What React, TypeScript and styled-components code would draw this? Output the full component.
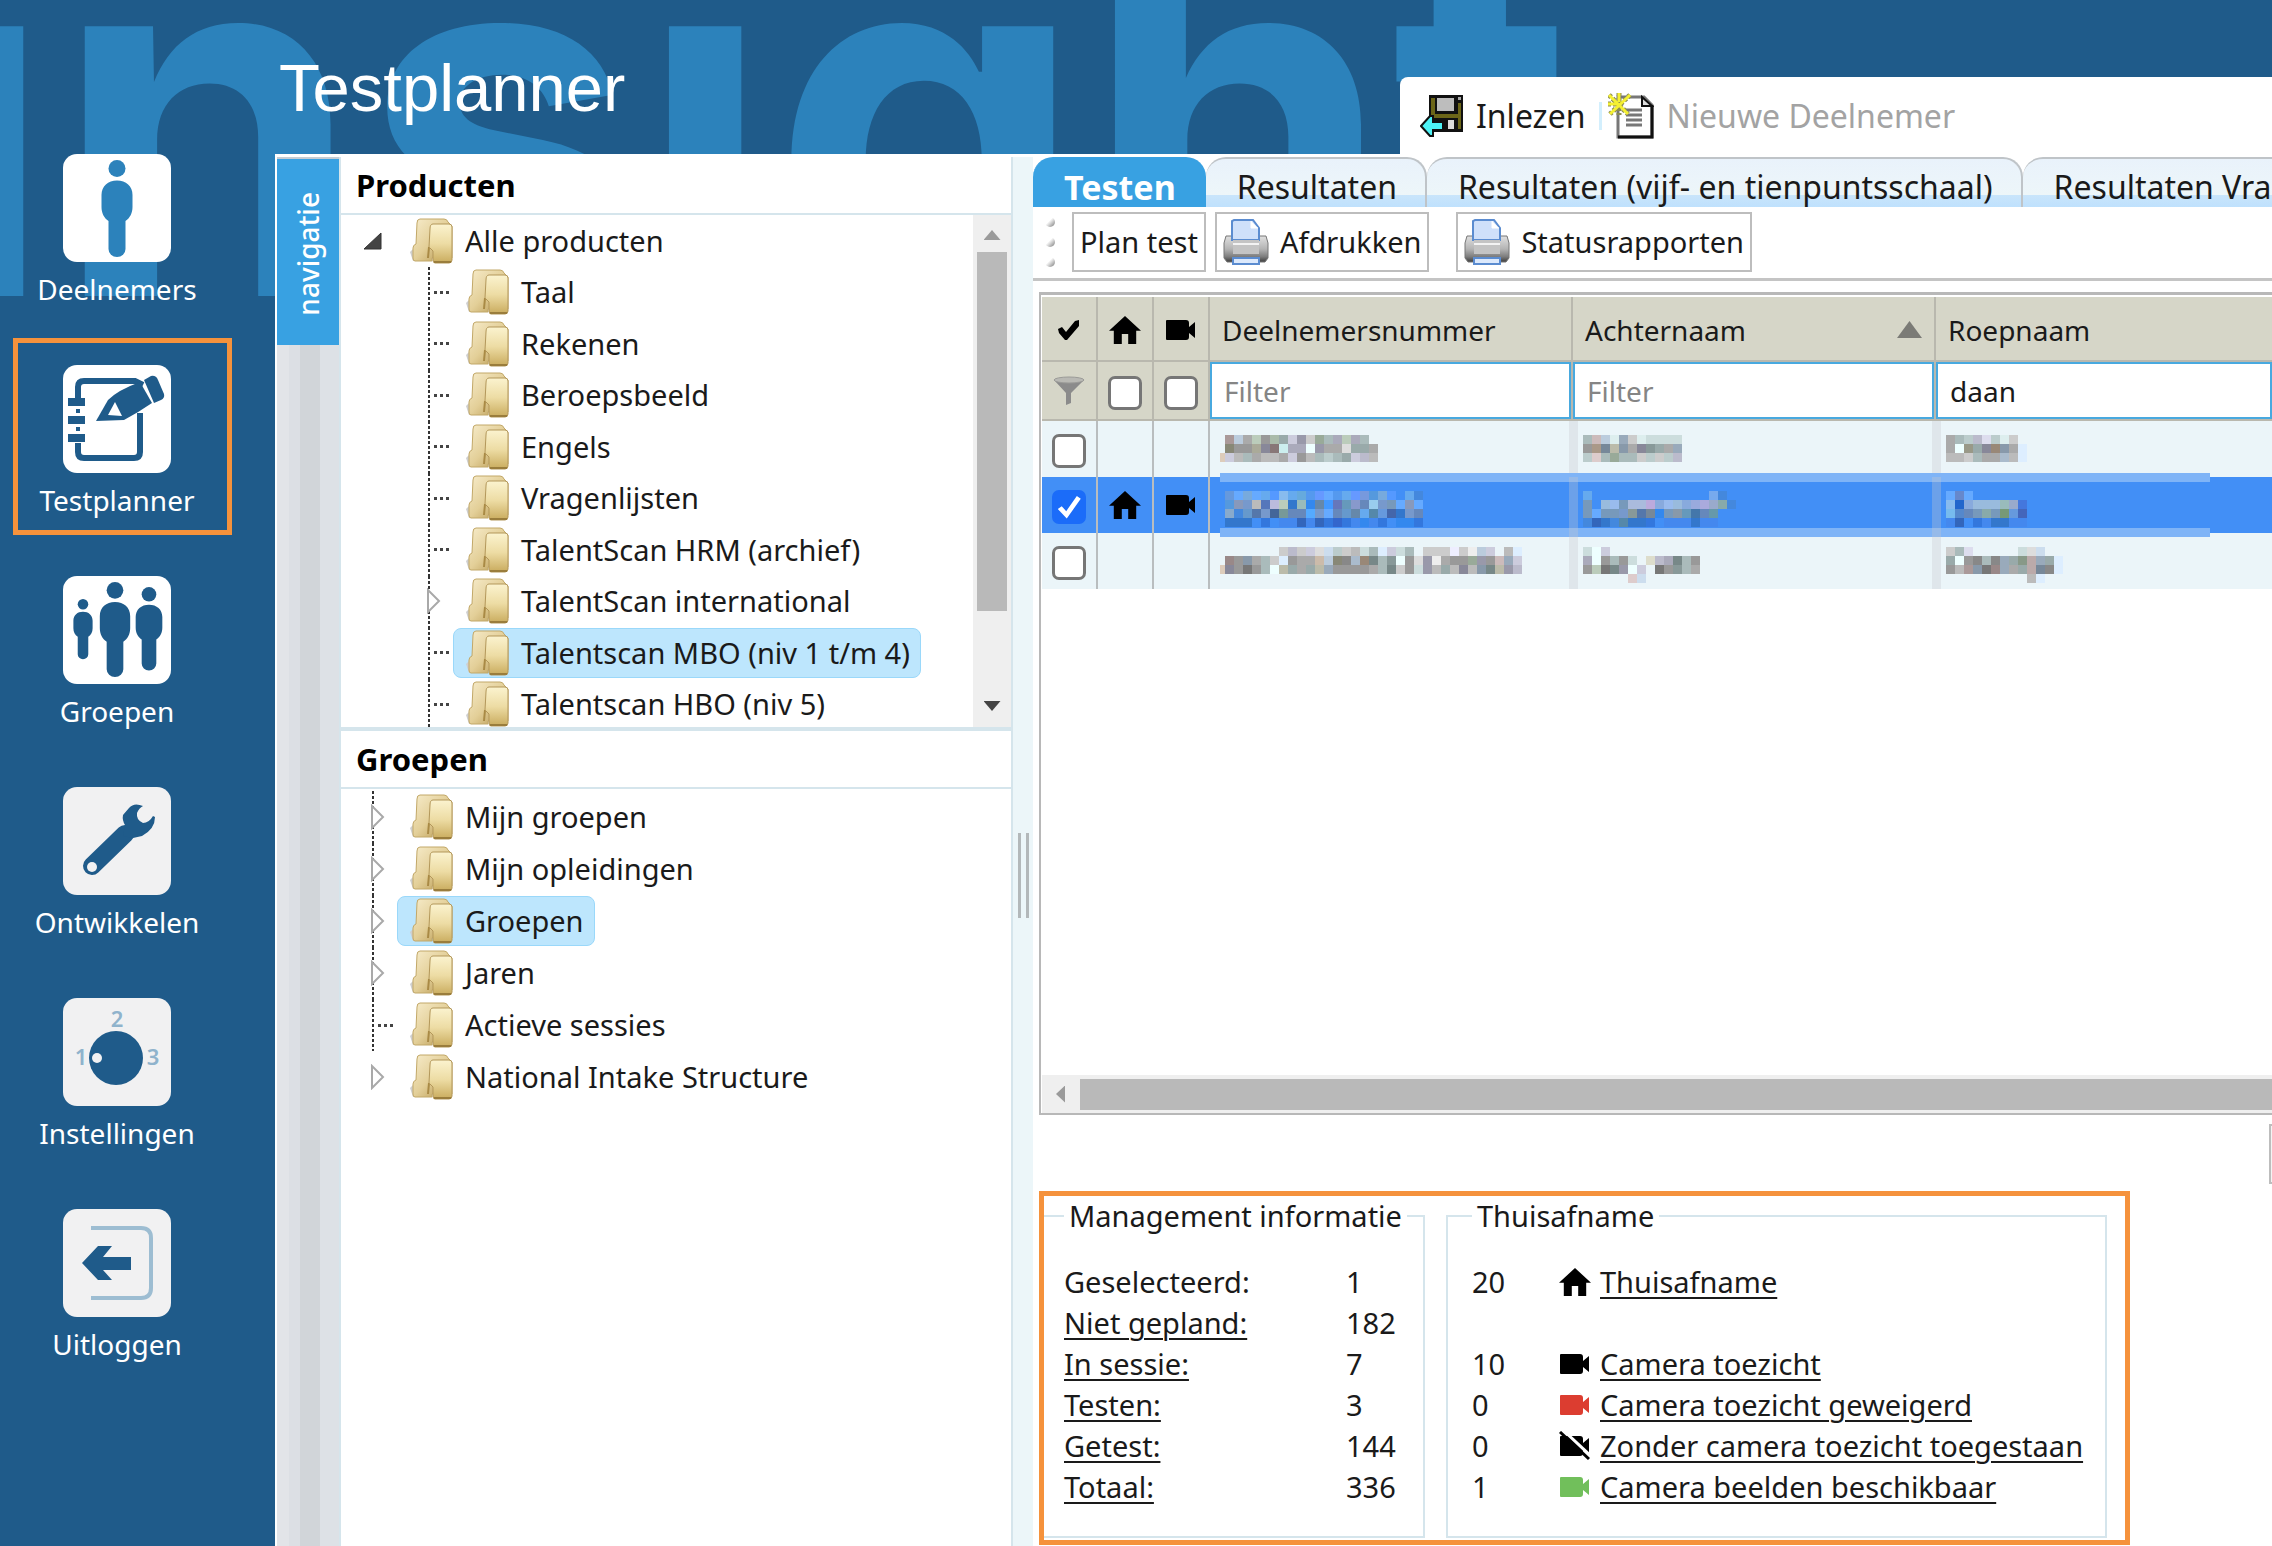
import React from 'react';
import styled, { createGlobalStyle, css } from 'styled-components';

const color = {
  navy: '#1f5b8a',
  water: '#2c82bb',
  accent: '#38a1e2',
  orange: '#f5923c',
  line: '#d5e5ec',
  pale: '#ecf6f9',
  head: '#d6d6c8',
  headLine: '#b9b8ae',
  grey: '#b9b9b9',
  track: '#efefef',
  row: '#ebf5f9',
  selected: '#428ff6',
  text: '#1a1a1a',
};

const GlobalStyle = createGlobalStyle`
  * { box-sizing: border-box; }
  body {
    margin: 0;
    font: 29px/36px "Noto Sans", "Open Sans", sans-serif;
    color: ${color.text};
  }
  button, input { font: inherit; color: inherit; }
  button { cursor: pointer; }
  svg { display: block; flex: none; }
`;

/* ---------- shell ---------- */

const Page = styled.div`
  position: relative;
  display: grid;
  grid-template: 154px 1fr / 275px minmax(0, 1fr);
  min-height: 100vh;
  overflow: hidden;
  background: ${color.navy};
`;

const Watermark = styled.div`
  position: absolute;
  left: -80px;
  top: -131px;
  height: 429px;
  overflow: hidden;
  font: bold 494px/494px Inter, Roboto, sans-serif;
  color: ${color.water};
  white-space: nowrap;
  user-select: none;
`;

const Header = styled.header`
  position: relative;
  grid-column: 2;
  display: grid;
  grid-template-columns: minmax(0, 1125px) minmax(0, 1fr);
`;

const Title = styled.h1`
  margin: 0;
  padding: 48px 0 0 4px;
  font: 67px/80px "Liberation Sans", Arial, sans-serif;
  color: #fff;
`;

const TopBar = styled.div`
  display: flex;
  align-items: center;
  align-self: end;
  height: 77px;
  padding-left: 20px;
  border-radius: 8px 0 0 0;
  background: #fff;
`;

const TopAction = styled.button`
  display: flex;
  align-items: center;
  gap: 12px;
  padding: 0;
  border: 0;
  background: none;
  font-size: 32px;
  white-space: nowrap;
  &:disabled { color: #a3a3a3; }
`;

const TopDivider = styled.span`
  width: 3px;
  height: 28px;
  margin: 0 6px 0 14px;
  background: #d3effd;
`;

/* ---------- sidebar ---------- */

const Sidebar = styled.nav`
  position: relative;
  grid-row: 2;
  grid-column: 1;
  display: flex;
  flex-direction: column;
  padding-left: 13px;
`;

const SideItem = styled.a<{ $active?: boolean }>`
  position: relative;
  display: flex;
  flex-direction: column;
  align-items: center;
  gap: 9px;
  width: 208px;
  height: 211px;
  font-size: 28px;
  color: #fff;
  text-decoration: none;
  ${p => p.$active && css`
    &::after {
      content: '';
      position: absolute;
      inset: -27px -11px 41px 0;
      border: 5px solid ${color.orange};
    }
  `}
`;

/* ---------- workspace ---------- */

const Workspace = styled.div`
  position: relative;
  grid-row: 2;
  grid-column: 2;
  display: flex;
  padding: 3px 0 0 2px;
  background: #fff;
`;

const NavStrip = styled.div`
  flex: 0 0 62px;
  background: linear-gradient(to right, #e2e4e8 12px, #dcdfe4 12px 23px, #d1d5d9 23px 43px, #dde1e6 43px);
`;

const NavTab = styled.button`
  width: 62px;
  height: 188px;
  padding: 4px 0 0;
  border: 0;
  border-top: 2px solid #c5cdd4;
  background: ${color.accent};
  color: #fff;
  font-size: 28px;
  font-weight: 500;
  writing-mode: vertical-rl;
  span { display: inline-block; transform: rotate(180deg); }
`;

const Explorer = styled.div`
  flex: 0 0 674px;
  display: flex;
  flex-direction: column;
  border: solid ${color.line};
  border-width: 0 2px;
`;

const PanelTitle = styled.h2`
  margin: 0;
  height: 58px;
  padding-left: 15px;
  border-bottom: 2px solid ${color.line};
  font-size: 31px;
  line-height: 56px;
  color: #000;
`;

const ProductArea = styled.div`
  display: flex;
  justify-content: space-between;
  height: 516px;
  border-bottom: 4px solid ${color.line};
  overflow: hidden;
`;

const GroupArea = styled.div`
  padding-top: 2px;
`;

const Tree = styled.ul<{ $rows: number; $rowHeight: string }>`
  display: grid;
  grid-template-rows: repeat(${p => p.$rows}, ${p => p.$rowHeight});
  height: ${p => (p.$rowHeight === '1fr' ? '515px' : 'auto')};
  margin: 0;
  padding: 0;
  list-style: none;
`;

const TreeRow = styled.li<{ $depth: number }>`
  display: flex;
  align-items: center;
  padding-left: ${p => 22 + 56 * p.$depth}px;
`;

const Connector = styled.span<{ $line: boolean; $branch: boolean }>`
  display: flex;
  align-items: center;
  align-self: stretch;
  width: 34px;
  background-image:
    repeating-linear-gradient(#333 0 3px, transparent 3px 5px),
    repeating-linear-gradient(to right, #444 0 3px, transparent 3px 6px);
  background-repeat: no-repeat;
  background-position: 9px 0, 15px 50%;
  background-size: ${p => (p.$line ? '2px 100%' : '0 0')}, ${p => (p.$branch ? '15px 3px' : '0 0')};
`;

const Node = styled.button<{ $selected?: boolean }>`
  display: flex;
  align-items: center;
  gap: 12px;
  height: 50px;
  padding: 0 10px 0 12px;
  border: 1px solid ${p => (p.$selected ? '#9ad8fa' : 'transparent')};
  border-radius: 8px;
  background: ${p => (p.$selected ? '#bde6fd' : 'none')};
  white-space: nowrap;
`;

const VScroll = styled.div`
  display: flex;
  flex-direction: column;
  align-items: center;
  justify-content: space-between;
  width: 38px;
  padding: 15px 0 16px;
  background: ${color.track};
`;

const VThumb = styled.div`
  width: 30px;
  height: 359px;
  margin: 12px 0 auto;
  background: ${color.grey};
`;

const Arrow = styled.span<{ $dir: 'up' | 'down' | 'left'; $tone?: string }>`
  width: ${p => (p.$dir === 'left' ? 9 : 17)}px;
  height: ${p => (p.$dir === 'left' ? 17 : 10)}px;
  background: ${p => p.$tone ?? '#9a9a9a'};
  clip-path: ${p => ({
    up: 'polygon(50% 0, 100% 100%, 0 100%)',
    down: 'polygon(0 0, 100% 0, 50% 100%)',
    left: 'polygon(0 50%, 100% 0, 100% 100%)',
  })[p.$dir]};
`;

const Splitter = styled.div`
  flex: 0 0 20px;
  padding: 676px 4px 0 5px;
  background: ${color.pale};
  &::before {
    content: '';
    display: block;
    height: 85px;
    border: solid #b3b8ba;
    border-width: 0 3px;
  }
`;

/* ---------- main ---------- */

const Main = styled.main`
  flex: 1;
  min-width: 0;
  display: flex;
  flex-direction: column;
`;

const Tabs = styled.div`
  display: flex;
  flex: 0 0 50px;
  overflow: hidden;
`;

const Tab = styled.button<{ $active?: boolean }>`
  flex: none;
  padding: 8px 28px 0 31px;
  border: 2px solid ${p => (p.$active ? color.accent : '#bfc4c8')};
  border-width: 2px 2px 0 0;
  border-radius: 20px 20px 0 0;
  background: ${p => (p.$active ? color.accent : 'linear-gradient(#e9f2fb, #edf6f9 36px, #c9e5fb 36px, #bfe1fd)')};
  color: ${p => (p.$active ? '#fff' : color.text)};
  font-size: ${p => (p.$active ? 34 : 32)}px;
  font-weight: ${p => (p.$active ? 700 : 400)};
  white-space: nowrap;
`;

const ToolRow = styled.div`
  display: flex;
  align-items: center;
  flex: 0 0 74px;
  padding: 0 0 2px 12px;
  border-bottom: 3px solid #c4c4c4;
`;

const Grip = styled.span`
  display: grid;
  gap: 10px;
  margin-right: 17px;
  i {
    width: 10px;
    height: 10px;
    border-radius: 50%;
    background: linear-gradient(135deg, #fff 40%, #777);
  }
`;

const ToolButton = styled.button<{ $wide?: boolean }>`
  display: flex;
  align-items: center;
  gap: 11px;
  height: 60px;
  margin-right: ${p => (p.$wide ? 27 : 9)}px;
  padding: 0 6px;
  border: 2px solid #bdbdbd;
  background: #fff;
  white-space: nowrap;
`;

const GridBox = styled.section`
  flex: 1;
  display: flex;
  flex-direction: column;
  margin: 11px 0 0 6px;
  border: solid #b8b8b8;
  border-width: 3px 0 2px 2px;
  padding: 2px 0 0 1px;
`;

const Table = styled.table`
  width: 100%;
  table-layout: fixed;
  border-collapse: separate;
  border-spacing: 0;
  font-size: 28px;
`;

const Th = styled.th`
  height: 65px;
  padding: 2px 12px 0;
  border: solid ${color.headLine};
  border-width: 0 2px 2px 0;
  background: ${color.head};
  font-weight: 400;
  text-align: left;
  &:last-child { border-right: 0; }
`;

const HeadLabel = styled.div`
  display: flex;
  align-items: center;
  justify-content: space-between;
`;

const SortMark = styled.span`
  width: 25px;
  height: 17px;
  background: #7b7b76;
  clip-path: polygon(50% 0, 100% 100%, 0 100%);
`;

const IconTh = styled(Th)`
  padding: 2px 0 0;
  svg { margin: 0 auto; }
`;

const FilterTh = styled(Th)`
  height: 59px;
  padding: 0;
  text-align: center;
  svg { margin: 0 auto; }
`;

const FilterInput = styled.input`
  display: block;
  width: 100%;
  height: 57px;
  padding: 0 12px;
  border: 2px solid #48a9df;
  border-radius: 0;
  outline: 0;
  &::placeholder { color: #858585; opacity: 1; }
`;

const Check = styled.input`
  appearance: none;
  display: inline-block;
  width: 34px;
  height: 34px;
  margin: 0;
  border: 3px solid #767676;
  border-radius: 7px;
  background: #fff;
  vertical-align: middle;
  &:checked { border-color: #1b6cf9; background: #1b6cf9; }
  &:checked::before {
    content: '';
    display: block;
    height: 28px;
    background: #fff;
    clip-path: polygon(10% 56%, 24% 46%, 40% 64%, 78% 10%, 92% 20%, 42% 90%);
  }
`;

const Tr = styled.tr<{ $selected?: boolean }>`
  background: ${p => (p.$selected ? color.selected : color.row)};
`;

const IconTd = styled.td`
  height: 56px;
  padding: 0;
  border-right: 2px solid #b9bdbf;
  text-align: center;
  svg { margin: 0 auto; }
`;

const DataTd = styled.td<{ $selected?: boolean; $edge: 'first' | 'middle' | 'last' }>`
  position: relative;
  padding: 14px 0 0 10px;
  vertical-align: top;
  ${p => p.$selected && css`
    &::before {
      content: '';
      position: absolute;
      top: -4px;
      bottom: -4px;
      left: ${p.$edge === 'first' ? 10 : 0}px;
      right: ${p.$edge === 'last' ? 62 : 0}px;
      border: solid #7fb4f7;
      border-width: 9px 0;
    }
  `}
  ${p => p.$edge !== 'first' && css`
    &::after {
      content: '';
      position: absolute;
      top: 0;
      bottom: 0;
      left: -4px;
      width: 9px;
      background: rgba(200, 200, 205, 0.32);
    }
  `}
`;

const HScroll = styled.div`
  display: flex;
  align-items: center;
  height: 38px;
  margin-top: auto;
  padding-left: 14px;
  background: ${color.track};
`;

const HThumb = styled.div`
  flex: 1;
  height: 31px;
  margin-left: 15px;
  background: ${color.grey};
`;

const PagerRow = styled.div`
  display: flex;
  justify-content: flex-end;
  flex: 0 0 76px;
  padding-top: 9px;
`;

const PagerButton = styled.button`
  width: 60px;
  height: 60px;
  margin-right: -57px;
  border: 2px solid #bdbdbd;
  background: #f4f4f4;
`;

const Summary = styled.section`
  display: flex;
  align-self: flex-start;
  gap: 21px;
  margin: 0 0 1px 6px;
  padding: 2px 18px 2px 0;
  border: 5px solid ${color.orange};
`;

const Box = styled.fieldset<{ $open?: boolean }>`
  margin: 0;
  padding: 27px ${p => (p.$open ? 14 : 22)}px 29px ${p => (p.$open ? 20 : 24)}px;
  border: 2px solid ${color.line};
  border-left-width: ${p => (p.$open ? 0 : 2)}px;
`;

const Legend = styled.legend`
  padding: 0 5px;
`;

const Facts = styled.table`
  border-spacing: 0;
  th, td { height: 41px; padding: 0; font-weight: 400; text-align: left; white-space: nowrap; }
`;

const Col = styled.col<{ $w: number }>`
  width: ${p => p.$w}px;
`;

const TextLink = styled.a`
  color: ${color.text};
  text-decoration: underline;
  text-decoration-thickness: 2px;
  text-underline-offset: 4px;
`;

/* ---------- drawings ---------- */

const Tile = ({ children, muted }: { children: React.ReactNode; muted?: boolean }) => (
  <svg width="108" height="108" viewBox="0 0 108 108" aria-hidden="true">
    <rect width="108" height="108" rx="14" fill={muted ? '#f1f1f2' : '#fff'} />
    {children}
  </svg>
);

const Person = ({ x, y, s, fill }: { x: number; y: number; s: number; fill: string }) => (
  <g transform={`translate(${x} ${y}) scale(${s})`} fill={fill}>
    <circle cx="0" cy="8.500" r="8.500" />
    <path d="M-15.500 35C-15.500 26-9 20.500 0 20.500S15.500 26 15.500 35V47C15.500 53 13 58 8.500 61V89A8.500 8 0 0 1-8.500 89V61C-13 58-15.500 53-15.500 47Z" />
  </g>
);

const PersonIcon = () => <Tile><Person x={54} y={6} s={1} fill={color.water} /></Tile>;

const PeopleIcon = () => (
  <Tile>
    <Person x={20} y={23} s={0.62} fill={color.navy} />
    <Person x={52} y={6} s={0.98} fill={color.navy} />
    <Person x={86} y={11} s={0.86} fill={color.navy} />
  </Tile>
);

const PlannerIcon = () => (
  <Tile>
    <path d="M15 33V22q0-6 6-6H72l8 4M77 48V87q0 6-6 6H21q-6 0-6-6V78" fill="none" stroke={color.navy} strokeWidth="6" />
    <path d="M5 33h17v8H5zM5 51h17v8H5zM5 69h17v8H5zM13 44h4v4h-4zM13 62h4v4h-4z" fill={color.navy} />
    <path d="M33 56L45 35Q55 25 77 17L89 38Q76 47 61 55Z" fill={color.navy} />
    <path d="M45 50L52 37 59 51Z" fill="#fff" />
    <path d="M81 15L88 11Q93 10 95 15L101 29Q102 33 98 35L91 38Z" fill={color.navy} />
  </Tile>
);

const WrenchIcon = () => (
  <Tile muted>
    <path d="M29 79L62 47" stroke={color.navy} strokeWidth="18" strokeLinecap="round" />
    <path d="M80 19Q71 15 66 21L60 28Q59 33 62 38L60 49 70 51 79 49Q92 42 92 30L90 29Q86 36 80 36 73 33 74 26Q76 21 80 19Z" fill={color.navy} />
    <circle cx="29" cy="80" r="5" fill="#f1f1f2" />
  </Tile>
);

const DialIcon = () => (
  <Tile muted>
    <circle cx="53" cy="60" r="27" fill={color.navy} />
    <circle cx="34" cy="60" r="5" fill="#f1f1f2" />
    <g fill="#8fb3cc" fontSize="22" fontFamily="Noto Sans, sans-serif" fontWeight="600" textAnchor="middle">
      <text x="18" y="67">1</text>
      <text x="54" y="29">2</text>
      <text x="90" y="67">3</text>
    </g>
  </Tile>
);

const LogoutIcon = () => (
  <Tile muted>
    <path d="M28 19H78Q88 19 88 29V79Q88 89 78 89H28" fill="none" stroke="#9dbdd2" strokeWidth="4" />
    <path d="M19 54L35 37H49L40 48H68V61H40L49 71H35Z" fill={color.navy} />
  </Tile>
);

const FolderIcon = () => (
  <svg width="43" height="46" viewBox="0 0 43 46" aria-hidden="true">
    <defs>
      <linearGradient id="folderBack" x1="0" y1="0" x2="1" y2="1">
        <stop offset="0" stopColor="#f7eccb" /><stop offset="0.5" stopColor="#e3cf98" /><stop offset="1" stopColor="#b08f45" />
      </linearGradient>
      <linearGradient id="folderFront" x1="0" y1="0" x2="0" y2="1">
        <stop offset="0" stopColor="#fbf3cf" /><stop offset="0.5" stopColor="#eddca4" /><stop offset="1" stopColor="#c9ab5d" />
      </linearGradient>
    </defs>
    <path d="M0 34L6 28V43H3Z" fill="#cfcfcf" />
    <path d="M7 5Q7 1 10 1H34Q37 1 38 4L42 8V40H22V43H5Q3 43 3 40V30Q3 27 6 26Z" fill="url(#folderBack)" stroke="#c2a868" strokeWidth="1" />
    <path d="M18 40L19 29" stroke="#a98a45" strokeWidth="2" />
    <path d="M20 11Q20 6 23 6H39Q42 6 42 9V42Q42 45 39 45H25Q23 45 23 42V33L19 29Z" fill="url(#folderFront)" stroke="#b3975a" strokeWidth="1" />
    <path d="M24 44H41" stroke="#9a7d3c" strokeWidth="2" />
  </svg>
);

const Expander = () => (
  <svg width="34" height="26" viewBox="0 0 34 26" aria-hidden="true">
    <path d="M9 2V24L20 13Z" fill="#fff" stroke="#a9a9a9" strokeWidth="2" />
  </svg>
);

const Collapser = () => (
  <svg width="34" height="18" viewBox="0 0 34 18" aria-hidden="true">
    <path d="M18 1V17H1Z" fill="#444" stroke="#333" strokeWidth="1" />
  </svg>
);

const HouseIcon = () => (
  <svg width="32" height="28" viewBox="2 3 20 17" preserveAspectRatio="none" aria-hidden="true">
    <path d="M10 20v-6h4v6h5v-8h3L12 3 2 12h3v8z" fill="#000" />
  </svg>
);

const CameraIcon = ({ fill = '#000', off }: { fill?: string; off?: boolean }) => (
  <svg width="32" height="30" viewBox="0 0 32 30" aria-hidden="true">
    <path d="M2 5H21Q24 5 24 8V12L30 7V23L24 18V22Q24 25 21 25H2Q1 25 1 24V6Q1 5 2 5Z" fill={fill} />
    {off && <path d="M4 -1L34 27" stroke="#fff" strokeWidth="3" />}
    {off && <path d="M1 1L30 28" stroke="#000" strokeWidth="3" />}
  </svg>
);

const TickIcon = () => (
  <svg width="22" height="20" viewBox="0 0 22 20" aria-hidden="true">
    <path d="M0 9L4 7 8 12 17 1 21 0V6L9 20H7L1 13Z" fill="#000" />
  </svg>
);

const FunnelIcon = () => (
  <svg width="32" height="30" viewBox="0 0 32 30" aria-hidden="true">
    <path d="M1 4L13 17V29L18 27V17L31 4Z" fill="#8b8b8b" />
    <ellipse cx="16" cy="4" rx="15" ry="3" fill="#b9b9b4" stroke="#9b9b98" />
  </svg>
);

const PrinterIcon = () => (
  <svg width="46" height="46" viewBox="0 0 46 46" aria-hidden="true">
    <defs>
      <linearGradient id="printer" x1="0" y1="0" x2="0" y2="1">
        <stop offset="0" stopColor="#e0e0e0" /><stop offset="0.5" stopColor="#b4b4b4" /><stop offset="0.8" stopColor="#7c7c7c" /><stop offset="1" stopColor="#3c3c3c" />
      </linearGradient>
    </defs>
    <path d="M3 17H43L45 24V39L42 43H4L1 39V24Z" fill="url(#printer)" stroke="#777" />
    <path d="M9 21V2L11 1H30L36 9V21Z" fill="#cfe0fa" stroke="#5b8cd0" strokeWidth="2" />
    <path d="M28 2V9H35" fill="#fff" stroke="#fff" />
    <path d="M10 21H36V35H10Z" fill="#c4c4c4" />
    <path d="M10 25H36" stroke="#f3f3f3" strokeWidth="2" />
    <path d="M10 39H36V45H10Z" fill="#dce9fc" stroke="#5b8cd0" strokeWidth="2" />
  </svg>
);

const FloppyIcon = () => (
  <svg width="44" height="44" viewBox="0 0 44 44" aria-hidden="true">
    <path d="M9 1H43V38H13L9 34Z" fill="#111" />
    <path d="M11 4H15V20H38V9H41V35H38V24H13L11 22Z" fill="#6c6618" />
    <path d="M17 4H34V17H17Z" fill="#bdbdbd" />
    <path d="M38 3H41V6H38Z" fill="#aaa" />
    <path d="M28 26H34V35H28Z" fill="#ddd" />
    <path d="M1 32L10 22H13V28H23V36H13V42H10Z" fill="#4df3f6" stroke="#111" strokeWidth="2" />
  </svg>
);

const NewDocIcon = () => (
  <svg width="46" height="46" viewBox="0 0 46 46" aria-hidden="true">
    <path d="M10 4H36L44 12V44H10Z" fill="#fff" stroke="#777" strokeWidth="3" />
    <path d="M10 44H44V12" fill="none" stroke="#111" strokeWidth="3" />
    <path d="M34 4V13H44Z" fill="#ddd" stroke="#111" strokeWidth="2" />
    <path d="M18 17H34M18 22H34M18 27H34M18 32H34" stroke="#777" strokeWidth="3" />
    <path d="M1 2L20 21M22 2L2 21M11 0V9M0 11H9M11 15V22" stroke="#8a8a52" strokeWidth="5" strokeDasharray="3 2" />
    <path d="M1 2L20 21M22 2L2 21M11 0V9M0 11H9" stroke="#f5f032" strokeWidth="3" />
  </svg>
);

/* Anonymised cell content: every string is one row of 9px blocks, three hex digits each, "..." is empty. */
const Mosaic = ({ rows, lead = 0 }: { rows: string[]; lead?: number }) => {
  const grid = rows.map(r => r.trim().split(/\s+/));
  const width = Math.max(...grid.map(r => r.length)) * 9 - lead;
  return (
    <svg width={width} height="36" viewBox={`${lead} 0 ${width} 36`} shapeRendering="crispEdges" role="img" aria-label="onleesbaar gemaakt">
      {grid.map((cells, y) => cells.map((c, x) => c !== '...' && (
        <rect key={`${x}-${y}`} x={x * 9} y={y * 9} width="9" height="9" fill={`#${c}`} />
      )))}
    </svg>
  );
};

/* ---------- data ---------- */

const sideItems = [
  { label: 'Deelnemers', icon: <PersonIcon /> },
  { label: 'Testplanner', icon: <PlannerIcon />, active: true },
  { label: 'Groepen', icon: <PeopleIcon /> },
  { label: 'Ontwikkelen', icon: <WrenchIcon /> },
  { label: 'Instellingen', icon: <DialIcon /> },
  { label: 'Uitloggen', icon: <LogoutIcon /> },
];

type TreeItem = { label: string; depth?: number; mark: 'open' | 'closed' | 'leaf'; line?: boolean; selected?: boolean };

const products: TreeItem[] = [
  { label: 'Alle producten', mark: 'open' },
  { label: 'Taal', depth: 1, mark: 'leaf', line: true },
  { label: 'Rekenen', depth: 1, mark: 'leaf', line: true },
  { label: 'Beroepsbeeld', depth: 1, mark: 'leaf', line: true },
  { label: 'Engels', depth: 1, mark: 'leaf', line: true },
  { label: 'Vragenlijsten', depth: 1, mark: 'leaf', line: true },
  { label: 'TalentScan HRM (archief)', depth: 1, mark: 'leaf', line: true },
  { label: 'TalentScan international', depth: 1, mark: 'closed', line: true },
  { label: 'Talentscan MBO (niv 1 t/m 4)', depth: 1, mark: 'leaf', line: true, selected: true },
  { label: 'Talentscan HBO (niv 5)', depth: 1, mark: 'leaf', line: true },
];

const groups: TreeItem[] = [
  { label: 'Mijn groepen', mark: 'closed', line: true },
  { label: 'Mijn opleidingen', mark: 'closed', line: true },
  { label: 'Groepen', mark: 'closed', line: true, selected: true },
  { label: 'Jaren', mark: 'closed', line: true },
  { label: 'Actieve sessies', mark: 'leaf', line: true },
  { label: 'National Intake Structure', mark: 'closed' },
];

const participants = [
  {
    id: 1,
    cells: [
      ['... a99 bcd aaa bcb 999 aba 9aa ccd 99a ccc 9a9 abb aab bcb aab abb', '... 887 999 999 aa9 889 877 cee aab aab eff 99a aaa aaa ddd 9aa 9aa aaa', 'dcb ccd bbb abb aaa bbb bbb aaa ccd 999 bbb abb bcc abb 9aa ccd bbc bbb'],
      ['abb cbb bcd dee 9ab ccc dee cdd cdd cdd cdd', '999 a98 789 bba 89a aaa 889 899 9aa aaa 9ab', 'bcc dcc abb 9a9 abb abb ccc bcc ccc bcc bbc'],
      ['aaa abb bcc bbc dde bcc dee ccc', 'aaa eff 998 9aa 889 987 89a aaa def', 'bbb bbb ccc abb aaa aaa abc bbb def'],
    ],
  },
  {
    id: 2,
    selected: true,
    cells: [
      ['... 69d 6af 7ad 6af 6ae 59f 8be 6ae 6ad 59e 69f 6af 59e 6ae 69f 79d 59d 7ad 59f ... 6ae 48d', '... 59d 89b 79c bbb 57b bbd bcb 37c 9bb 38e 68a 49f 67b 69b 89c 68b 9ce 79c 79b 6af 89b 6af', '... 8ac 48d 69c 57a 79c 469 799 68b 68b 5af 79c 6af 68b 69c 68a 6ae 58a 69d 46a 37c 79c 68b', '... 37c 37c 37c ... 37d ... 48e 48e 36b 48e 36b 37d 36c 37d 48e 38e 48e 37d ... 38e 38e 37d'],
      ['6ae ... ... ... ... ... ... ... ... ... ... ... ... ... 7ae 48d', '79b ... 9bd 9be 79b abd abd bad 8ad 9be 9bd 8ad 9ad aad 9ac 8aa 48d', '79b 6af 79b 79b 79c 899 57a 789 38e 79b 89a 69b 47a 68b 69a', '48d 36b 37c 48d 58a 37c 37c 37d ... 48e 48e 48e 37c 48e 48e'],
      ['6af 68c 6af', '8be 26c 8ad 9bd 9bd 9bd 9bb 9ac 47d', '7be 58c 68b 79b 8aa 79b 797 69d 46b', '48e 36b ... 37d 48e 37c 37c 48e 48e'],
    ],
  },
  {
    id: 3,
    cells: [
      ['... ... ... ... ... ... ... ccc bbc ccc ccd ddd cde bcc ccc bbb cdd abb def ccd cdd abb ... ccc ccc ccc eef ccc eee bcd ccd ... bbb def', '... 988 999 89a aaa abb ccc def 999 aaa aaa cba bcd 887 888 abc 987 788 abb 899 eff 999 ddd 99a eee aaa 999 999 9a9 99a 999 cbb 9ab ccd', 'dcb 889 999 777 999 abb eff bba 9aa aaa 9aa bba 9ab 999 999 999 999 aaa abb 788 ccc 999 cdd 99a bbb 9aa bbb 889 bbb 89a 788 bba 99a bbc'],
      ['cdd eff ccd', 'aab eff 999 abb 999 cdd ... ddc bbc aab 788 abb 999', '999 bcb 777 788 99a eff ccd ... 777 999 899 abb aaa', '... ... ... ... ... dcc cde'],
      ['ccc abb dde ... ... ... ... ... cdd ddd cde', '9aa eff 999 888 abb 888 9ab 9aa 898 baa 9ab 9aa def', '999 bbb a99 89a 777 988 9ab aaa 9aa baa 789 888 def', '... ... ... ... ... ... ... ... ... bbb def'],
    ],
  },
];

const stats = [
  ['Geselecteerd:', '1', false],
  ['Niet gepland:', '182', true],
  ['In sessie:', '7', true],
  ['Testen:', '3', true],
  ['Getest:', '144', true],
  ['Totaal:', '336', true],
] as const;

const homeStats = [
  { n: '20', label: 'Thuisafname', icon: <HouseIcon /> },
  null,
  { n: '10', label: 'Camera toezicht', icon: <CameraIcon /> },
  { n: '0', label: 'Camera toezicht geweigerd', icon: <CameraIcon fill="#dc3d30" /> },
  { n: '0', label: 'Zonder camera toezicht toegestaan', icon: <CameraIcon off /> },
  { n: '1', label: 'Camera beelden beschikbaar', icon: <CameraIcon fill="#71bf5b" /> },
];

const edges = ['first', 'middle', 'last'] as const;

const TreeView = ({ items, rowHeight }: { items: TreeItem[]; rowHeight: string }) => (
  <Tree $rows={items.length} $rowHeight={rowHeight}>
    {items.map(item => (
      <TreeRow key={item.label} $depth={item.depth ?? 0}>
        <Connector $line={!!item.line} $branch={item.mark === 'leaf'}>
          {item.mark === 'open' && <Collapser />}
          {item.mark === 'closed' && <Expander />}
        </Connector>
        <Node type="button" $selected={item.selected}><FolderIcon />{item.label}</Node>
      </TreeRow>
    ))}
  </Tree>
);

export default function App() {
  return (
    <>
      <GlobalStyle />
      <Page>
        <Watermark aria-hidden="true">insight</Watermark>

        <Header>
          <Title>Testplanner</Title>
          <TopBar>
            <TopAction type="button"><FloppyIcon />Inlezen</TopAction>
            <TopDivider />
            <TopAction type="button" disabled><NewDocIcon />Nieuwe Deelnemer</TopAction>
          </TopBar>
        </Header>

        <Sidebar>
          {sideItems.map(item => (
            <SideItem key={item.label} href="#" $active={item.active}>
              {item.icon}
              {item.label}
            </SideItem>
          ))}
        </Sidebar>

        <Workspace>
          <NavStrip>
            <NavTab type="button"><span>navigatie</span></NavTab>
          </NavStrip>

          <Explorer>
            <PanelTitle>Producten</PanelTitle>
            <ProductArea>
              <TreeView items={products} rowHeight="1fr" />
              <VScroll>
                <Arrow $dir="up" />
                <VThumb />
                <Arrow $dir="down" $tone="#444" />
              </VScroll>
            </ProductArea>
            <PanelTitle>Groepen</PanelTitle>
            <GroupArea>
              <TreeView items={groups} rowHeight="52px" />
            </GroupArea>
          </Explorer>

          <Splitter />

          <Main>
            <Tabs>
              <Tab type="button" $active>Testen</Tab>
              <Tab type="button">Resultaten</Tab>
              <Tab type="button">Resultaten (vijf- en tienpuntsschaal)</Tab>
              <Tab type="button">Resultaten Vragenlijsten</Tab>
            </Tabs>
            <ToolRow>
              <Grip><i /><i /><i /></Grip>
              <ToolButton type="button">Plan test</ToolButton>
              <ToolButton type="button" $wide><PrinterIcon />Afdrukken</ToolButton>
              <ToolButton type="button"><PrinterIcon />Statusrapporten</ToolButton>
            </ToolRow>

            <GridBox>
              <Table>
                <colgroup>
                  <Col $w={56} /><Col $w={56} /><Col $w={56} />
                  <Col $w={363} /><Col $w={363} /><col />
                </colgroup>
                <thead>
                  <tr>
                    <IconTh aria-label="Geselecteerd"><TickIcon /></IconTh>
                    <IconTh aria-label="Thuisafname"><HouseIcon /></IconTh>
                    <IconTh aria-label="Camera"><CameraIcon /></IconTh>
                    <Th>Deelnemersnummer</Th>
                    <Th><HeadLabel>Achternaam<SortMark /></HeadLabel></Th>
                    <Th>Roepnaam</Th>
                  </tr>
                  <tr>
                    <FilterTh><FunnelIcon /></FilterTh>
                    <FilterTh><Check type="checkbox" aria-label="Filter thuisafname" /></FilterTh>
                    <FilterTh><Check type="checkbox" aria-label="Filter camera" /></FilterTh>
                    <FilterTh><FilterInput placeholder="Filter" aria-label="Filter deelnemersnummer" /></FilterTh>
                    <FilterTh><FilterInput placeholder="Filter" aria-label="Filter achternaam" /></FilterTh>
                    <FilterTh><FilterInput defaultValue="daan" aria-label="Filter roepnaam" /></FilterTh>
                  </tr>
                </thead>
                <tbody>
                  {participants.map(p => (
                    <Tr key={p.id} $selected={p.selected}>
                      <IconTd><Check type="checkbox" defaultChecked={p.selected} aria-label={`Deelnemer ${p.id}`} /></IconTd>
                      <IconTd>{p.selected && <HouseIcon />}</IconTd>
                      <IconTd>{p.selected && <CameraIcon />}</IconTd>
                      {p.cells.map((rows, i) => (
                        <DataTd key={i} $selected={p.selected} $edge={edges[i]}>
                          <Mosaic rows={rows} lead={i === 0 ? 4 : 0} />
                        </DataTd>
                      ))}
                    </Tr>
                  ))}
                </tbody>
              </Table>
              <HScroll>
                <Arrow $dir="left" />
                <HThumb />
              </HScroll>
            </GridBox>

            <PagerRow><PagerButton type="button" aria-label="Volgende" /></PagerRow>

            <Summary>
              <Box $open>
                <Legend>Management informatie</Legend>
                <Facts>
                  <colgroup><Col $w={282} /><Col $w={63} /></colgroup>
                  <tbody>
                    {stats.map(([label, value, linked]) => (
                      <tr key={label}>
                        <th scope="row">{linked ? <TextLink href="#">{label}</TextLink> : label}</th>
                        <td>{value}</td>
                      </tr>
                    ))}
                  </tbody>
                </Facts>
              </Box>
              <Box>
                <Legend>Thuisafname</Legend>
                <Facts>
                  <colgroup><Col $w={87} /><Col $w={41} /><col /></colgroup>
                  <tbody>
                    {homeStats.map((row, i) => (
                      <tr key={i}>
                        <td>{row?.n}</td>
                        <td>{row?.icon}</td>
                        <td>{row && <TextLink href="#">{row.label}</TextLink>}</td>
                      </tr>
                    ))}
                  </tbody>
                </Facts>
              </Box>
            </Summary>
          </Main>
        </Workspace>
      </Page>
    </>
  );
}
